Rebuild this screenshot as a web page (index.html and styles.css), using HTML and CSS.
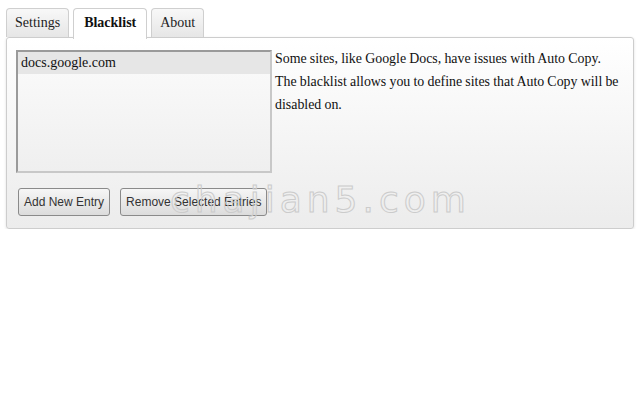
FILE: index.html
```html
<!DOCTYPE html>
<html>
<head>
<meta charset="utf-8">
<link rel="stylesheet" href="styles.css">
</head>
<body>
<div class="tabs">
  <div class="tab">Settings</div>
  <div class="tab active">Blacklist</div>
  <div class="tab">About</div>
</div>
<div class="panel">
  <div class="row">
    <div class="list">
      <div class="item selected">docs.google.com</div>
    </div>
    <p class="desc">Some sites, like Google Docs, have issues with Auto Copy. The blacklist allows you to define sites that Auto Copy will be disabled on.</p>
  </div>
  <div class="buttons">
    <button class="btn">Add New Entry</button>
    <button class="btn">Remove Selected Entries</button>
  </div>
</div>
<div class="watermark">chajian5.com</div>
</body>
</html>
```
FILE: styles.css
```css
html, body { margin: 0; padding: 0; background: #fff; }
body {
  font-family: "Liberation Serif", "Times New Roman", serif;
  font-size: 14px;
  color: #111;
  padding: 8px 6px 0 6px;
  width: 628px;
  position: relative;
}
.tabs {
  display: flex;
  gap: 4px;
  height: 29px;
  position: relative;
  z-index: 2;
}
.tab {
  height: 28px;
  padding: 0 8px;
  line-height: 28px;
  font-size: 14px;
  border: 1px solid #cfcfcf;
  border-bottom: none;
  border-radius: 4px 4px 0 0;
  background: linear-gradient(#f8f8f8, #e6e6e6);
  color: #222;
}
.tab.active {
  background: #fff;
  font-weight: bold;
  height: 30px;
  padding: 0 10px;
  color: #111;
}
.panel {
  border: 1px solid #cdcdcd;
  border-radius: 3px;
  background: linear-gradient(#ffffff, #ececec);
  box-shadow: 0 1px 3px rgba(0,0,0,0.12);
  height: 192px;
  padding: 12px 3px 0 9px;
  box-sizing: border-box;
}
.row { display: flex; gap: 3px; }
.list {
  width: 252px;
  height: 119px;
  border: 2px solid #9a9a9a;
  border-right-color: #c8c8c8;
  border-bottom-color: #c8c8c8;
  background: linear-gradient(#fbfbfb, #efefef);
  flex: none;
}
.item {
  height: 22px;
  line-height: 22px;
  padding-left: 3px;
  font-size: 14px;
}
.item.selected { background: #e6e6e6; }
.desc {
  margin: -3px 0 0 0;
  width: 348px;
  line-height: 23px;
  font-size: 13.9px;
  word-spacing: -0.3px;
  color: #111;
}
.buttons {
  display: flex;
  gap: 10px;
  margin-top: 15px;
  padding-left: 2px;
}
.btn {
  font-family: "Liberation Sans", Arial, sans-serif;
  font-size: 12px;
  color: #333;
  height: 28px;
  padding: 0 5px;
  border: 1px solid #8a8a8a;
  border-radius: 3px;
  background: linear-gradient(#f6f6f6, #dcdcdc);
}
.watermark {
  position: absolute;
  left: 170px;
  top: 179px;
  font-family: "DejaVu Sans", sans-serif;
  font-size: 36px;
  letter-spacing: 5px;
  color: transparent;
  -webkit-text-stroke: 1px #cbcbcb;
  z-index: 3;
}
```
